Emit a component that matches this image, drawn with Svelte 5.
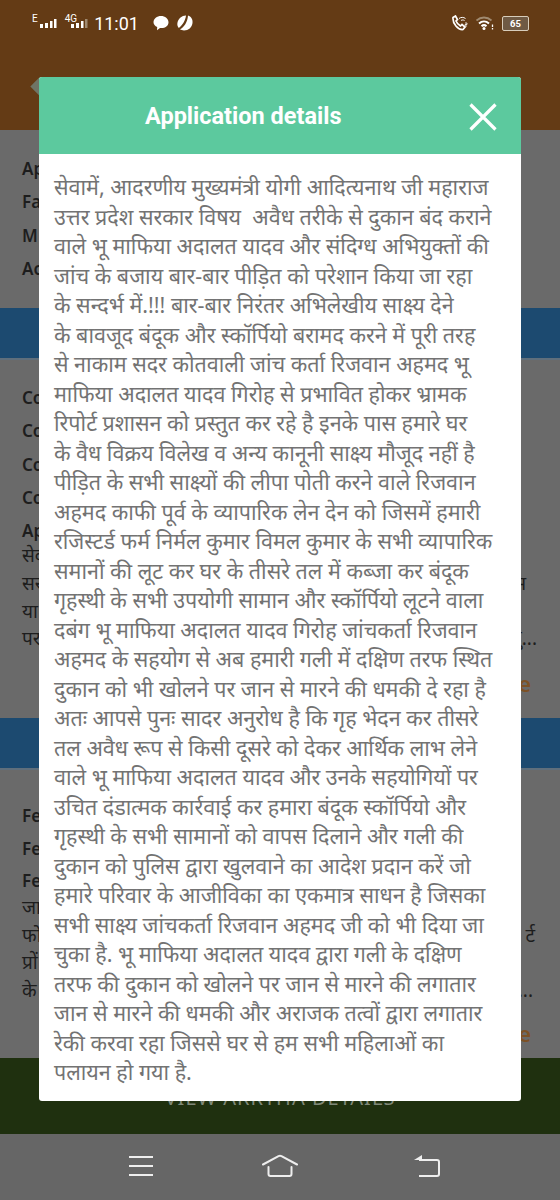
<script>
  const lines = [
    'सेवामें, आदरणीय मुख्यमंत्री योगी आदित्यनाथ जी महाराज',
    'उत्तर प्रदेश सरकार विषय  अवैध तरीके से दुकान बंद कराने',
    'वाले भू माफिया अदालत यादव और संदिग्ध अभियुक्तों की',
    'जांच के बजाय बार-बार पीड़ित को परेशान किया जा रहा',
    'के सन्दर्भ में.!!! बार-बार निरंतर अभिलेखीय साक्ष्य देने',
    'के बावजूद बंदूक और स्कॉर्पियो बरामद करने में पूरी तरह',
    'से नाकाम सदर कोतवाली जांच कर्ता रिजवान अहमद भू',
    'माफिया अदालत यादव गिरोह से प्रभावित होकर भ्रामक',
    'रिपोर्ट प्रशासन को प्रस्तुत कर रहे है इनके पास हमारे घर',
    'के वैध विक्रय विलेख व अन्य कानूनी साक्ष्य मौजूद नहीं है',
    'पीड़ित के सभी साक्ष्यों की लीपा पोती करने वाले रिजवान',
    'अहमद काफी पूर्व के व्यापारिक लेन देन को जिसमें हमारी',
    'रजिस्टर्ड फर्म निर्मल कुमार विमल कुमार के सभी व्यापारिक',
    'समानों की लूट कर घर के तीसरे तल में कब्जा कर बंदूक',
    'गृहस्थी के सभी उपयोगी सामान और स्कॉर्पियो लूटने वाला',
    'दबंग भू माफिया अदालत यादव गिरोह जांचकर्ता रिजवान',
    'अहमद के सहयोग से अब हमारी गली में दक्षिण तरफ स्थित',
    'दुकान को भी खोलने पर जान से मारने की धमकी दे रहा है',
    'अतः आपसे पुनः सादर अनुरोध है कि गृह भेदन कर तीसरे',
    'तल अवैध रूप से किसी दूसरे को देकर आर्थिक लाभ लेने',
    'वाले भू माफिया अदालत यादव और उनके सहयोगियों पर',
    'उचित दंडात्मक कार्रवाई कर हमारा बंदूक स्कॉर्पियो और',
    'गृहस्थी के सभी सामानों को वापस दिलाने और गली की',
    'दुकान को पुलिस द्वारा खुलवाने का आदेश प्रदान करें जो',
    'हमारे परिवार के आजीविका का एकमात्र साधन है जिसका',
    'सभी साक्ष्य जांचकर्ता रिजवान अहमद जी को भी दिया जा',
    'चुका है. भू माफिया अदालत यादव द्वारा गली के दक्षिण',
    'तरफ की दुकान को खोलने पर जान से मारने की लगातार',
    'जान से मारने की धमकी और अराजक तत्वों द्वारा लगातार',
    'रेकी करवा रहा जिससे घर से हम सभी महिलाओं का',
    'पलायन हो गया है.'
  ];
  // only the slivers the modal leaves uncovered are readable in the page behind it
  const applicant = ['Ap', 'Fa', 'M', 'Ac'];
  const complaint = ['Co', 'Co', 'Co', 'Co'];
  const feedback = ['Fe', 'Fe'];
</script>

<div class="page">
  <header class="topbar">
    <div class="status">
      <div class="status-left">
        <span class="net">E</span>
        <svg width="19" height="10" viewBox="0 0 19 10"><path d="M1 6h3v4H1zM6 5h3v5H6zM11 3h2.500v7H11zM15 1h2.500v9H15z" fill="#fff"/></svg>
        <span class="net g">4G</span>
        <svg width="19" height="10" viewBox="0 0 19 10"><path d="M1 6h3v4H1zM6 5h3v5H6zM11 3h2.500v7H11z" fill="#fff"/><path d="M15 1h2.500v9H15z" fill="#a08a70"/></svg>
        <span class="time">11:01</span>
        <svg width="16" height="16" viewBox="0 0 16 16"><path d="M8 1c4 0 7.500 2.600 7.500 6.200S12.200 13 8.500 13c-.5 0-1 0-1.500-.1L4 15.200l.2-3.200C2 11 .5 9.300.5 7.200.5 3.600 4 1 8 1z" fill="#fff"/></svg>
        <svg class="ic-b" width="16" height="16" viewBox="0 0 16 16"><path d="M11 .5C14 1.500 16 4 15.500 8c-.5 4.500-4 7.500-8.500 7.500-1.500 0-3-.5-4-1.200C7 12.500 10.500 7 11 .5zM9 .6C8.500 5 6 10 1.800 13 .5 11.500 0 9.500.5 7.500 1.500 3.500 5 .5 9 .6z" fill="#fff"/></svg>
      </div>
      <div class="status-right">
        <svg width="17" height="17" viewBox="0 0 17 17"><path d="M2 2.500 4.500 1l2 3.500L5 6c.8 2 2.500 3.800 4.500 5l1.500-1.500 3 2.500-2 2.500C7 15 1.500 8.500 2 2.500z" fill="none" stroke="#fff" stroke-width="1.700"/><path d="M8 3.500c2-1.500 4.500-1.500 6.500 0M10 5.500c1-.7 2.500-.7 3.500 0" fill="none" stroke="#fff" stroke-width="1"/><path d="M14 8h2v1.500h-2v1.500h2" fill="none" stroke="#fff" stroke-width=".8"/></svg>
        <svg width="18" height="14" viewBox="0 0 18 14"><path d="M.5 4.500c4.400-4 10.600-4 15 0" fill="none" stroke="#a08a70" stroke-width="1.800"/><path d="M3 7.500c3-2.700 7-2.700 10 0" fill="none" stroke="#fff" stroke-width="2"/><path d="M5.500 10.200c1.500-1.300 3.500-1.300 5 0" fill="none" stroke="#fff" stroke-width="2"/><circle cx="8" cy="12.500" r="1.500" fill="#fff"/><path d="M16.500 8.500v2.500M16.500 12v1.500" stroke="#fff" stroke-width="1.300"/></svg>
        <span class="battery"><span>65</span></span>
      </div>
    </div>
    <div class="back"></div>
  </header>

  <section class="info first">
    {#each applicant as label}
      <p class="label">{label}</p>
    {/each}
  </section>
  <div class="band"></div>
  <section class="info second">
    {#each complaint as label}
      <p class="label">{label}</p>
    {/each}
    <p class="label tight">Ap</p>
    <p class="para"><span>सेव</span></p>
    <p class="para"><span>सर</span><span class="peek-a">म</span></p>
    <p class="para"><span>या</span></p>
    <p class="para"><span>पर</span><span class="peek-b">दु...</span></p>
    <p class="more">e</p>
  </section>
  <div class="band"></div>
  <section class="info third">
    {#each feedback as label}
      <p class="label">{label}</p>
    {/each}
    <p class="label tight">Fe</p>
    <p class="para"><span>जा</span></p>
    <p class="para"><span>फो</span><span class="peek-c">र्ट</span></p>
    <p class="para"><span>प्रों</span></p>
    <p class="para"><span>के</span><span class="peek-d">...</span></p>
    <p class="more">e</p>
  </section>
  <div class="action">VIEW ARRTHA DETAILS</div>
  <nav class="navbar">
    <svg width="26" height="22" viewBox="0 0 26 22"><path d="M1 2h24M1 11h24M1 20h24" stroke="#eee" stroke-width="2"/></svg>
    <svg width="36" height="24" viewBox="0 0 36 24"><path d="M1 10.500 16.500 2.200q1.500-.7 3 0L35 10.500M6.500 13v7q0 2 2 2h19q2 0 2-2v-7" fill="none" stroke="#eee" stroke-width="2" stroke-linecap="round"/></svg>
    <svg class="nav-back" width="28" height="24" viewBox="0 0 28 24"><path d="M6 6h18q2 0 2 2v12q0 2-2 2H6" fill="none" stroke="#eee" stroke-width="2"/><path d="M9 1 1 6h8z" fill="#eee"/></svg>
  </nav>

  <div class="modal">
    <div class="modal-head">
      <h2>Application details</h2>
      <svg class="close" width="28" height="28" viewBox="0 0 28 28"><path d="M1.500 1.500l25 25M26.500 1.500l-25 25" stroke="#fff" stroke-width="3.200"/></svg>
    </div>
    <div class="modal-body">
      {#each lines as line}
        <div class="line">{line}</div>
      {/each}
    </div>
  </div>
</div>

<style>
  :global(body) {
    margin: 0;
    background: #6a6a6a;
  }
  .page {
    position: relative;
    width: 560px;
    height: 1200px;
    overflow: hidden;
    font-family: "Noto Sans", "Roboto", sans-serif;
    background: #6a6a6a;
  }
  .topbar {
    height: 130px;
    background: #643b15;
    box-sizing: border-box;
    padding: 12px 31px 0 32px;
  }
  .status {
    display: flex;
    justify-content: space-between;
    align-items: center;
    height: 22px;
    color: #fff;
  }
  .status-left,
  .status-right {
    display: flex;
    align-items: center;
    gap: 4px;
  }
  .status-right {
    gap: 8px;
  }
  .net {
    font: 10px "Roboto", sans-serif;
    align-self: flex-start;
    margin-right: -3px;
  }
  .net.g {
    margin-left: 3px;
    margin-right: -11px;
  }
  .time {
    font: 18px "Roboto", sans-serif;
    margin: 0 10px 0 1px;
  }
  .ic-b {
    margin-left: 4px;
  }
  .battery {
    width: 25px;
    height: 13px;
    border: 1px solid #d8cdbb;
    border-radius: 2px;
    background: #6f5a44;
    font: bold 9.500px/13px "Roboto", sans-serif;
    text-align: center;
  }
  .back {
    width: 13px;
    height: 13px;
    margin: 46px 0 0 1px;
    background: #6f7566;
    transform: rotate(45deg);
  }
  .info {
    box-sizing: border-box;
    padding: 0 22px;
    color: #1d1d1d;
  }
  .first {
    height: 178px;
    padding-top: 25px;
  }
  .second {
    height: 358px;
    padding-top: 24px;
  }
  .third {
    height: 288px;
    padding-top: 32px;
  }
  .label {
    margin: 0;
    height: 33.300px;
    font: 600 17px/28px "Noto Sans", sans-serif;
    white-space: nowrap;
  }
  .third .label {
    height: 32.500px;
  }
  .label.tight {
    height: 25px;
  }
  .third .label.tight {
    height: 27px;
  }
  .para {
    display: flex;
    justify-content: space-between;
    margin: 0;
    height: 27.700px;
    font-size: 19px;
    line-height: 27.700px;
    white-space: nowrap;
  }
  /* right ends of the lines that stick out past the modal */
  .peek-a {
    margin-right: 12px;
  }
  .peek-b {
    margin-right: 1px;
  }
  .peek-c {
    margin-right: 3px;
  }
  .peek-d {
    margin-right: 5px;
  }
  .more {
    margin: 18px 7px 0 0;
    text-align: right;
    font-size: 22px;
    line-height: 24px;
    color: #7d5126;
    font-weight: 600;
  }
  .third .more {
    margin-top: 16px;
  }
  .band {
    height: 50px;
    background: #1c4a70;
    border-bottom: 2px solid #5f6f7c;
  }
  .action {
    height: 76px;
    background: #1f300f;
    color: #7f8878;
    font-size: 20px;
    letter-spacing: 1px;
    text-align: center;
    line-height: 80px;
  }
  .navbar {
    height: 66px;
    box-sizing: border-box;
    background: #666;
    display: flex;
    gap: 108px;
    align-items: center;
    padding: 0 0 2px 128px;
  }
  .nav-back {
    margin-left: 7px;
  }
  .modal {
    position: absolute;
    left: 39px;
    top: 77px;
    width: 482px;
    height: 1024px;
    background: #fff;
    border-radius: 3px;
    overflow: hidden;
  }
  .modal-head {
    position: relative;
    height: 77px;
    background: #5cc99e;
    display: flex;
    align-items: center;
  }
  .modal-head h2 {
    margin: 0 0 0 106px;
    font: 700 23.500px "Roboto", sans-serif;
    color: #fff;
  }
  .close {
    position: absolute;
    left: 430px;
    top: 26px;
  }
  .modal-body {
    padding: 18px 0 0 15px;
  }
  .line {
    height: 29.500px;
    line-height: 29.500px;
    font-size: 21.500px;
    color: #737373;
    white-space: pre;
  }
</style>
